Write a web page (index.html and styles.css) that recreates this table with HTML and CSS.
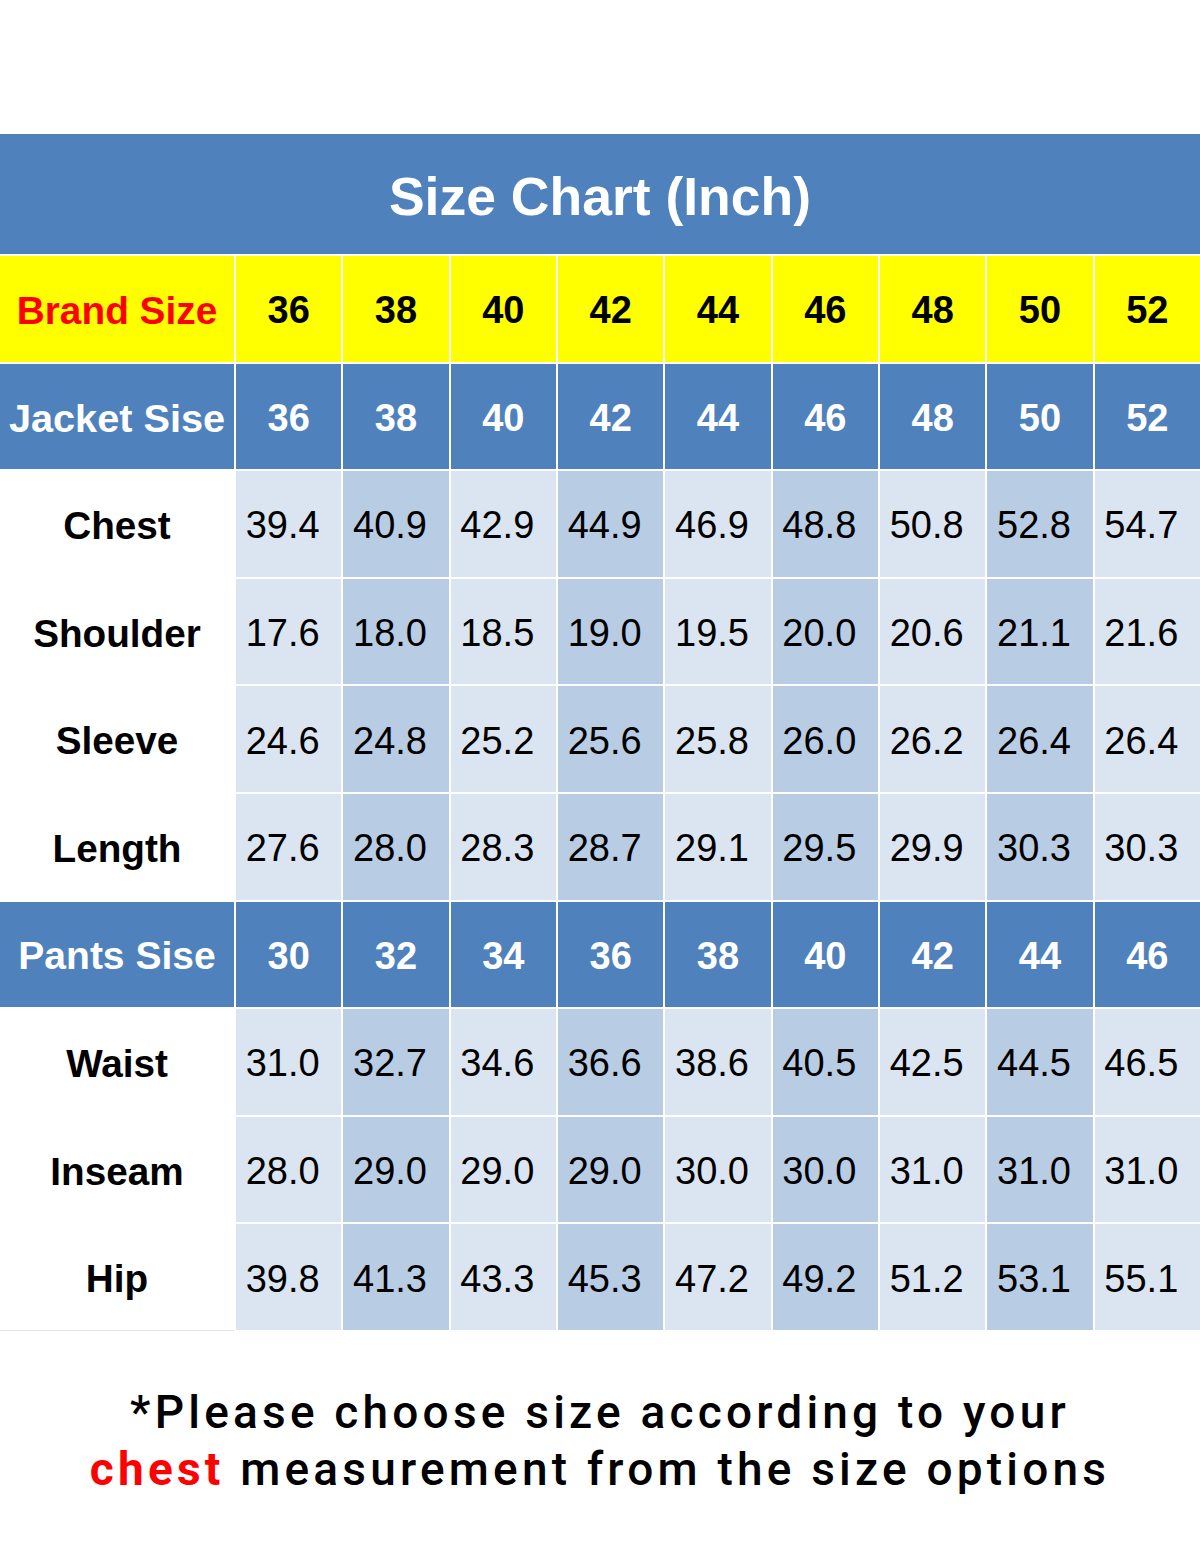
FILE: index.html
```html
<!DOCTYPE html>
<html>
<head>
<meta charset="utf-8">
<link rel="stylesheet" href="styles.css">
</head>
<body>
<div class="page">
  <div class="chart">
    <div class="title">Size Chart (Inch)</div>

    <div class="cell brand label-red">Brand Size</div>
    <div class="cell brand">36</div><div class="cell brand">38</div><div class="cell brand">40</div><div class="cell brand">42</div><div class="cell brand">44</div><div class="cell brand">46</div><div class="cell brand">48</div><div class="cell brand">50</div><div class="cell brand">52</div>

    <div class="cell head head-label jacket">Jacket Sise</div>
    <div class="cell head">36</div><div class="cell head">38</div><div class="cell head">40</div><div class="cell head">42</div><div class="cell head">44</div><div class="cell head">46</div><div class="cell head">48</div><div class="cell head">50</div><div class="cell head">52</div>

    <div class="cell rowlabel">Chest</div>
    <div class="cell v a">39.4</div><div class="cell v b">40.9</div><div class="cell v a">42.9</div><div class="cell v b">44.9</div><div class="cell v a">46.9</div><div class="cell v b">48.8</div><div class="cell v a">50.8</div><div class="cell v b">52.8</div><div class="cell v a">54.7</div>

    <div class="cell rowlabel">Shoulder</div>
    <div class="cell v a">17.6</div><div class="cell v b">18.0</div><div class="cell v a">18.5</div><div class="cell v b">19.0</div><div class="cell v a">19.5</div><div class="cell v b">20.0</div><div class="cell v a">20.6</div><div class="cell v b">21.1</div><div class="cell v a">21.6</div>

    <div class="cell rowlabel">Sleeve</div>
    <div class="cell v a">24.6</div><div class="cell v b">24.8</div><div class="cell v a">25.2</div><div class="cell v b">25.6</div><div class="cell v a">25.8</div><div class="cell v b">26.0</div><div class="cell v a">26.2</div><div class="cell v b">26.4</div><div class="cell v a">26.4</div>

    <div class="cell rowlabel">Length</div>
    <div class="cell v a">27.6</div><div class="cell v b">28.0</div><div class="cell v a">28.3</div><div class="cell v b">28.7</div><div class="cell v a">29.1</div><div class="cell v b">29.5</div><div class="cell v a">29.9</div><div class="cell v b">30.3</div><div class="cell v a">30.3</div>

    <div class="cell head head-label">Pants Sise</div>
    <div class="cell head">30</div><div class="cell head">32</div><div class="cell head">34</div><div class="cell head">36</div><div class="cell head">38</div><div class="cell head">40</div><div class="cell head">42</div><div class="cell head">44</div><div class="cell head">46</div>

    <div class="cell rowlabel">Waist</div>
    <div class="cell v a">31.0</div><div class="cell v b">32.7</div><div class="cell v a">34.6</div><div class="cell v b">36.6</div><div class="cell v a">38.6</div><div class="cell v b">40.5</div><div class="cell v a">42.5</div><div class="cell v b">44.5</div><div class="cell v a">46.5</div>

    <div class="cell rowlabel">Inseam</div>
    <div class="cell v a">28.0</div><div class="cell v b">29.0</div><div class="cell v a">29.0</div><div class="cell v b">29.0</div><div class="cell v a">30.0</div><div class="cell v b">30.0</div><div class="cell v a">31.0</div><div class="cell v b">31.0</div><div class="cell v a">31.0</div>

    <div class="cell rowlabel last">Hip</div>
    <div class="cell v a">39.8</div><div class="cell v b">41.3</div><div class="cell v a">43.3</div><div class="cell v b">45.3</div><div class="cell v a">47.2</div><div class="cell v b">49.2</div><div class="cell v a">51.2</div><div class="cell v b">53.1</div><div class="cell v a">55.1</div>
  </div>

  <div class="note">
    <p>*Please choose size according to your</p>
    <p><span class="red">chest</span> measurement from the size options</p>
  </div>
</div>
</body>
</html>
```
FILE: styles.css
```css
html, body {
  margin: 0;
  padding: 0;
  background: #ffffff;
}

.page {
  width: 1200px;
  padding-top: 134px;
  font-family: "Liberation Sans", Arial, sans-serif;
}

.chart {
  display: grid;
  grid-template-columns: 234px repeat(9, 1fr);
  grid-template-rows: 120px repeat(10, 105.6px);
  gap: 2px 2px;
  background: #ffffff;
}

.title {
  grid-column: 1 / -1;
  background: #4f81bd;
  color: #ffffff;
  font-weight: bold;
  font-size: 53.5px;
  display: flex;
  align-items: center;
  justify-content: center;
  padding-top: 4px;
}

.cell {
  display: flex;
  align-items: center;
  justify-content: center;
  font-size: 38px;
  color: #000000;
  padding-top: 4px;
}

.brand {
  background: #ffff00;
  font-weight: bold;
  font-size: 38px;
  color: #000000;
}

.label-red {
  color: #ff0000;
  font-size: 38.8px;
}

.head {
  background: #4f81bd;
  color: #ffffff;
  font-weight: bold;
  font-size: 38px;
}

.head-label {
  font-size: 39px;
}

.jacket {
  font-size: 39.7px;
}

.rowlabel {
  background: #ffffff;
  font-weight: bold;
  font-size: 38.7px;
}

.rowlabel.last {
  box-shadow: 0 1px 0 #e4e4e4;
}

.v {
  font-weight: normal;
  font-size: 38px;
  padding-right: 12px;
}

.a {
  background: #dbe5f1;
}

.b {
  background: #b8cce4;
}

.note {
  margin-top: 54px;
  text-align: center;
  font-family: Roboto, "DejaVu Sans Condensed", sans-serif;
  font-weight: 500;
  font-size: 46px;
  line-height: 57px;
  letter-spacing: 4.2px;
  white-space: nowrap;
  color: #000000;
}

.note p {
  margin: 0;
}

.red {
  color: #ff0000;
  font-weight: bold;
}
```
